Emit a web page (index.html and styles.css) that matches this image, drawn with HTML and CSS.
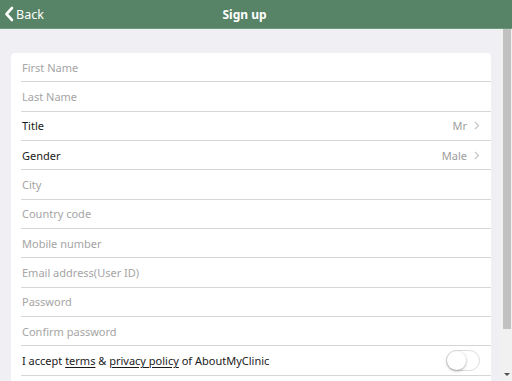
FILE: index.html
```html
<!DOCTYPE html>
<html>
<head>
<meta charset="utf-8">
<link rel="stylesheet" href="styles.css">
</head>
<body>
<div class="app">
  <header class="topbar">
    <div class="back">
      <svg class="chev" width="10" height="16" viewBox="0 0 10 16"><path d="M8 2 L2.5 8 L8 14" fill="none" stroke="#fff" stroke-width="2.6" stroke-linecap="round" stroke-linejoin="round"/></svg>
      <span>Back</span>
    </div>
    <div class="title">Sign up</div>
    <div></div>
  </header>
  <div class="main">
    <div class="scroll">
      <div class="card">
        <div class="row"><span class="ph">First Name</span></div>
        <div class="row"><span class="ph">Last Name</span></div>
        <div class="row"><span class="lbl">Title</span><span class="val">Mr<svg class="arr" width="6" height="9" viewBox="0 0 6 9"><path d="M1 1 L4.5 4.5 L1 8" fill="none" stroke="#c4c4c4" stroke-width="1.1"/></svg></span></div>
        <div class="row"><span class="lbl">Gender</span><span class="val">Male<svg class="arr" width="6" height="9" viewBox="0 0 6 9"><path d="M1 1 L4.5 4.5 L1 8" fill="none" stroke="#c4c4c4" stroke-width="1.1"/></svg></span></div>
        <div class="row"><span class="ph">City</span></div>
        <div class="row"><span class="ph">Country code</span></div>
        <div class="row"><span class="ph">Mobile number</span></div>
        <div class="row"><span class="ph">Email address(User ID)</span></div>
        <div class="row"><span class="ph">Password</span></div>
        <div class="row"><span class="ph">Confirm password</span></div>
        <div class="row"><span class="lbl">I accept <u>terms</u> &amp; <u>privacy policy</u> of AboutMyClinic</span><span class="toggle"><span class="knob"></span></span></div>
        <div class="row"></div>
      </div>
    </div>
    <div class="sbar">
      <div class="thumb"></div>
      <div class="sfill"></div>
      <div class="down"></div>
    </div>
  </div>
</div>
</body>
</html>
```
FILE: styles.css
```css
* { box-sizing: border-box; }
html, body { margin: 0; padding: 0; }
body {
  width: 512px; height: 381px; overflow: hidden;
  font-family: "Noto Sans", "Open Sans", sans-serif;
  background: #efeff4;
}
.app { display: flex; flex-direction: column; height: 381px; }
.topbar {
  height: 29px; flex: none;
  background: #578366;
  border-bottom: 1px solid #6d9a7b;
  display: grid; grid-template-columns: 1fr auto 1fr; align-items: center;
  color: #fff;
}
.back { display: flex; align-items: center; gap: 2px; padding-left: 4px; font-size: 12.5px; }
.chev { display: block; }
.title { font-weight: bold; font-size: 12px; margin-right: 23px; }
.main { flex: 1; display: flex; min-height: 0; }
.scroll { flex: 1; overflow: hidden; padding: 24px 10px 0 11px; }
.card { background: #fff; border-radius: 4px; }
.row {
  height: 29.33px; margin-left: 10px; padding-right: 11px; padding-left: 1px;
  border-bottom: 1px solid #d6d6d6;
  display: flex; align-items: center; justify-content: space-between;
  font-size: 11px;
}
.ph { color: #a5a5a5; }
.lbl { color: #1a1a1a; }
.lbl u { text-underline-offset: 2px; }
.val { color: #9c9c9c; display: flex; align-items: center; gap: 7px; }
.arr { display: block; }
.toggle {
  width: 34px; height: 21px; border-radius: 11px;
  border: 1px solid #dcdcdc; background: #fff;
  display: flex; align-items: center;
}
.knob {
  width: 19px; height: 19px; border-radius: 50%; background: #fff;
  box-shadow: 0 1px 3px rgba(0,0,0,0.35);
}
.sbar {
  width: 11px; flex: none; background: #f1f1f1;
  display: flex; flex-direction: column; align-items: center;
  padding: 0 1px 0 2px;
}
.thumb { width: 8px; height: 300px; background: #c1c1c1; }
.sfill { flex: 1; }
.down {
  width: 0; height: 0; margin-bottom: 5px;
  border-left: 3px solid transparent; border-right: 3px solid transparent;
  border-top: 3px solid #505050;
}
```
